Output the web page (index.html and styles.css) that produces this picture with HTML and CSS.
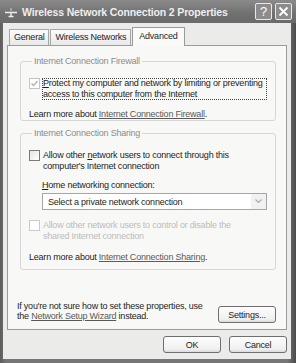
FILE: index.html
```html
<!DOCTYPE html>
<html lang="en">
<head>
    <meta charset="UTF-8">
    <title>Wireless Network Connection 2 Properties</title>
    <link rel="stylesheet" href="styles.css">
</head>
<body>
    <div class="window">
        <div class="titlebar">
            <svg class="app-icon" width="14" height="12" viewBox="0 0 14 12">
                <path d="M1 6.5h12M7 6.5v4M4.5 10.5h5" stroke="#eee" stroke-width="1.4" fill="none"/>
                <path d="M7 2v3" stroke="#ccc" stroke-width="1" fill="none"/>
            </svg>
            <span class="title">Wireless Network Connection 2 Properties</span>
            <span class="cap-btn">?</span>
            <span class="cap-btn">
                <svg width="11" height="11" viewBox="0 0 11 11"><path d="M1.5 1.5l8 8M9.5 1.5l-8 8" stroke="#fff" stroke-width="1.8"/></svg>
            </span>
        </div>
        <div class="client">
            <div class="tabs">
                <span class="tab">General</span>
                <span class="tab">Wireless Networks</span>
                <span class="tab active">Advanced</span>
            </div>
            <div class="panel">
                <fieldset class="group">
                    <legend>Internet Connection Firewall</legend>
                    <div class="check-row">
                        <span class="box checked disabled">
                            <svg width="9" height="9" viewBox="0 0 9 9"><path d="M1.5 4.5l2 2 4-4.5" stroke="#b4b4b4" stroke-width="1.5" fill="none"/></svg>
                        </span>
                        <span class="label focus"><u>P</u>rotect my computer and network by limiting or preventing access to this computer from the Internet</span>
                    </div>
                    <p class="learn">Learn more about <a href="#">Internet Connection Firewall</a>.</p>
                </fieldset>
                <fieldset class="group sharing">
                    <legend>Internet Connection Sharing</legend>
                    <div class="check-row">
                        <span class="box"></span>
                        <span class="label narrow">Allow other <u>n</u>etwork users to connect through this computer's Internet connection</span>
                    </div>
                    <div class="home">
                        <div class="home-label"><u>H</u>ome networking connection:</div>
                        <div class="select">
                            <span>Select a private network connection</span>
                            <span class="arrow">
                                <svg width="7" height="5" viewBox="0 0 7 5"><path d="M0.5 0.5l3 3 3-3" stroke="#aaa" stroke-width="1.2" fill="none"/></svg>
                            </span>
                        </div>
                    </div>
                    <div class="check-row off">
                        <span class="box"></span>
                        <span class="label narrow">Allow other network users to control or disable the shared Internet connection</span>
                    </div>
                    <p class="learn">Learn more about <a href="#">Internet Connection Sharing</a>.</p>
                </fieldset>
                <div class="footer">
                    <p>If you're not sure how to set these properties, use the <a href="#">Network Setup Wizard</a> instead.</p>
                    <span class="button settings">Settings...</span>
                </div>
            </div>
            <div class="actions">
                <span class="button">OK</span>
                <span class="button">Cancel</span>
            </div>
        </div>
    </div>
</body>
</html>
```

FILE: styles.css
```css
body {
    margin: 0;
    background: #fff;
    font-family: "Liberation Sans", Arial, sans-serif;
    font-size: 9px;
    letter-spacing: -0.22px;
    color: #1e1e1e;
}

.window {
    width: 296px;
    height: 363px;
    box-sizing: border-box;
    background: linear-gradient(90deg, #5c5c5c, #767676 2%, #767676 97%, #4a4a4a);
    padding: 0 5px 4px 3px;
    display: flex;
    flex-direction: column;
}

.titlebar {
    height: 23px;
    display: flex;
    align-items: center;
    gap: 3px;
    background: linear-gradient(#8a8a8a, #707070 60%, #6a6a6a);
    margin: 0 -5px 0 -3px;
    padding: 0 4px;
}

.app-icon {
    flex: none;
}

.title {
    flex: 1;
    color: #eee;
    font-weight: bold;
    font-size: 10.5px;
    letter-spacing: -0.15px;
    padding-left: 1px;
}

.cap-btn {
    width: 15px;
    height: 15px;
    border: 1px solid #e8e8e8;
    border-radius: 2px;
    background: #8c8c8c;
    color: #fff;
    font-size: 13px;
    display: flex;
    align-items: center;
    justify-content: center;
}

.client {
    flex: 1;
    background: #ebebea;
    padding: 4px 4px 0 4px;
    display: flex;
    flex-direction: column;
}

.tabs {
    display: flex;
    padding-left: 2px;
    height: 18px;
    align-items: flex-end;
}

.tab {
    height: 15px;
    line-height: 15px;
    padding: 0 4px;
    border: 1px solid #a7a7a7;
    border-bottom: none;
    background: linear-gradient(#fbfbfb, #e9e9e9);
    margin-right: 1px;
}

.tab.active {
    height: 18px;
    line-height: 17px;
    padding: 0 6px;
    background: #fafaf8;
    border-color: #9a9a9a;
    margin-bottom: -1px;
    position: relative;
    z-index: 1;
}

.panel {
    height: 285px;
    border: 1px solid #9b9b9b;
    background: #f8f8f6;
    box-sizing: border-box;
    padding: 10px 10px 0 12px;
    display: flex;
    flex-direction: column;
}

.group {
    margin: 0;
    border: 1px solid #d6d6d4;
    border-radius: 3px;
    padding: 12px 8px 0 8px;
}

.group legend {
    color: #8c8c8c;
    padding: 0 2px;
    margin-left: 3px;
}

.group.sharing {
    margin-top: 7px;
    padding-top: 12px;
    padding-bottom: 6px;
}

.check-row {
    display: flex;
    gap: 2px;
    align-items: flex-start;
    line-height: 11px;
}

.box {
    flex: none;
    width: 11px;
    height: 11px;
    box-sizing: border-box;
    border: 1px solid #7a7a7a;
    background: linear-gradient(135deg, #e6e6e6, #fff);
    display: flex;
    align-items: center;
    justify-content: center;
}

.box.disabled {
    border-color: #c4c4c4;
    background: #fff;
}

.label {
    padding: 0 1px;
}

.label.narrow {
    width: 196px;
}

.label.focus {
    outline: 1px dotted #444;
    outline-offset: -1px;
}

.off {
    color: #bcbcbc;
    margin-top: 10px;
}

.off .box {
    border-color: #cbcbcb;
    background: #fff;
}

.learn {
    margin: 9px 0 0;
    line-height: 11px;
}

.sharing .learn {
    margin-top: 10px;
}

a {
    color: #5a5a5a;
}

.home {
    padding-left: 13px;
    margin-top: 8px;
}

.home-label {
    line-height: 11px;
}

.select {
    margin-top: 2px;
    height: 17px;
    box-sizing: border-box;
    border: 1px solid #a6a6a6;
    background: #fff;
    display: flex;
    align-items: center;
    justify-content: space-between;
    padding-left: 5px;
}

.arrow {
    width: 15px;
    height: 15px;
    background: #f1f1f1;
    display: flex;
    align-items: center;
    justify-content: center;
}

.footer {
    margin-top: auto;
    margin-bottom: 6px;
    display: flex;
    align-items: flex-end;
    justify-content: space-between;
    margin-left: -3px;
}

.footer p {
    margin: 0;
    line-height: 10px;
    width: 195px;
    padding-bottom: 2px;
}

.button {
    width: 58px;
    height: 17px;
    box-sizing: border-box;
    border: 1px solid #6f6f6f;
    border-radius: 3px;
    background: linear-gradient(#fdfdfd, #f0f0f0 80%, #dcdcdc);
    display: flex;
    align-items: center;
    justify-content: center;
}

.actions {
    display: flex;
    justify-content: flex-end;
    gap: 8px;
    margin-top: 6px;
}
```
